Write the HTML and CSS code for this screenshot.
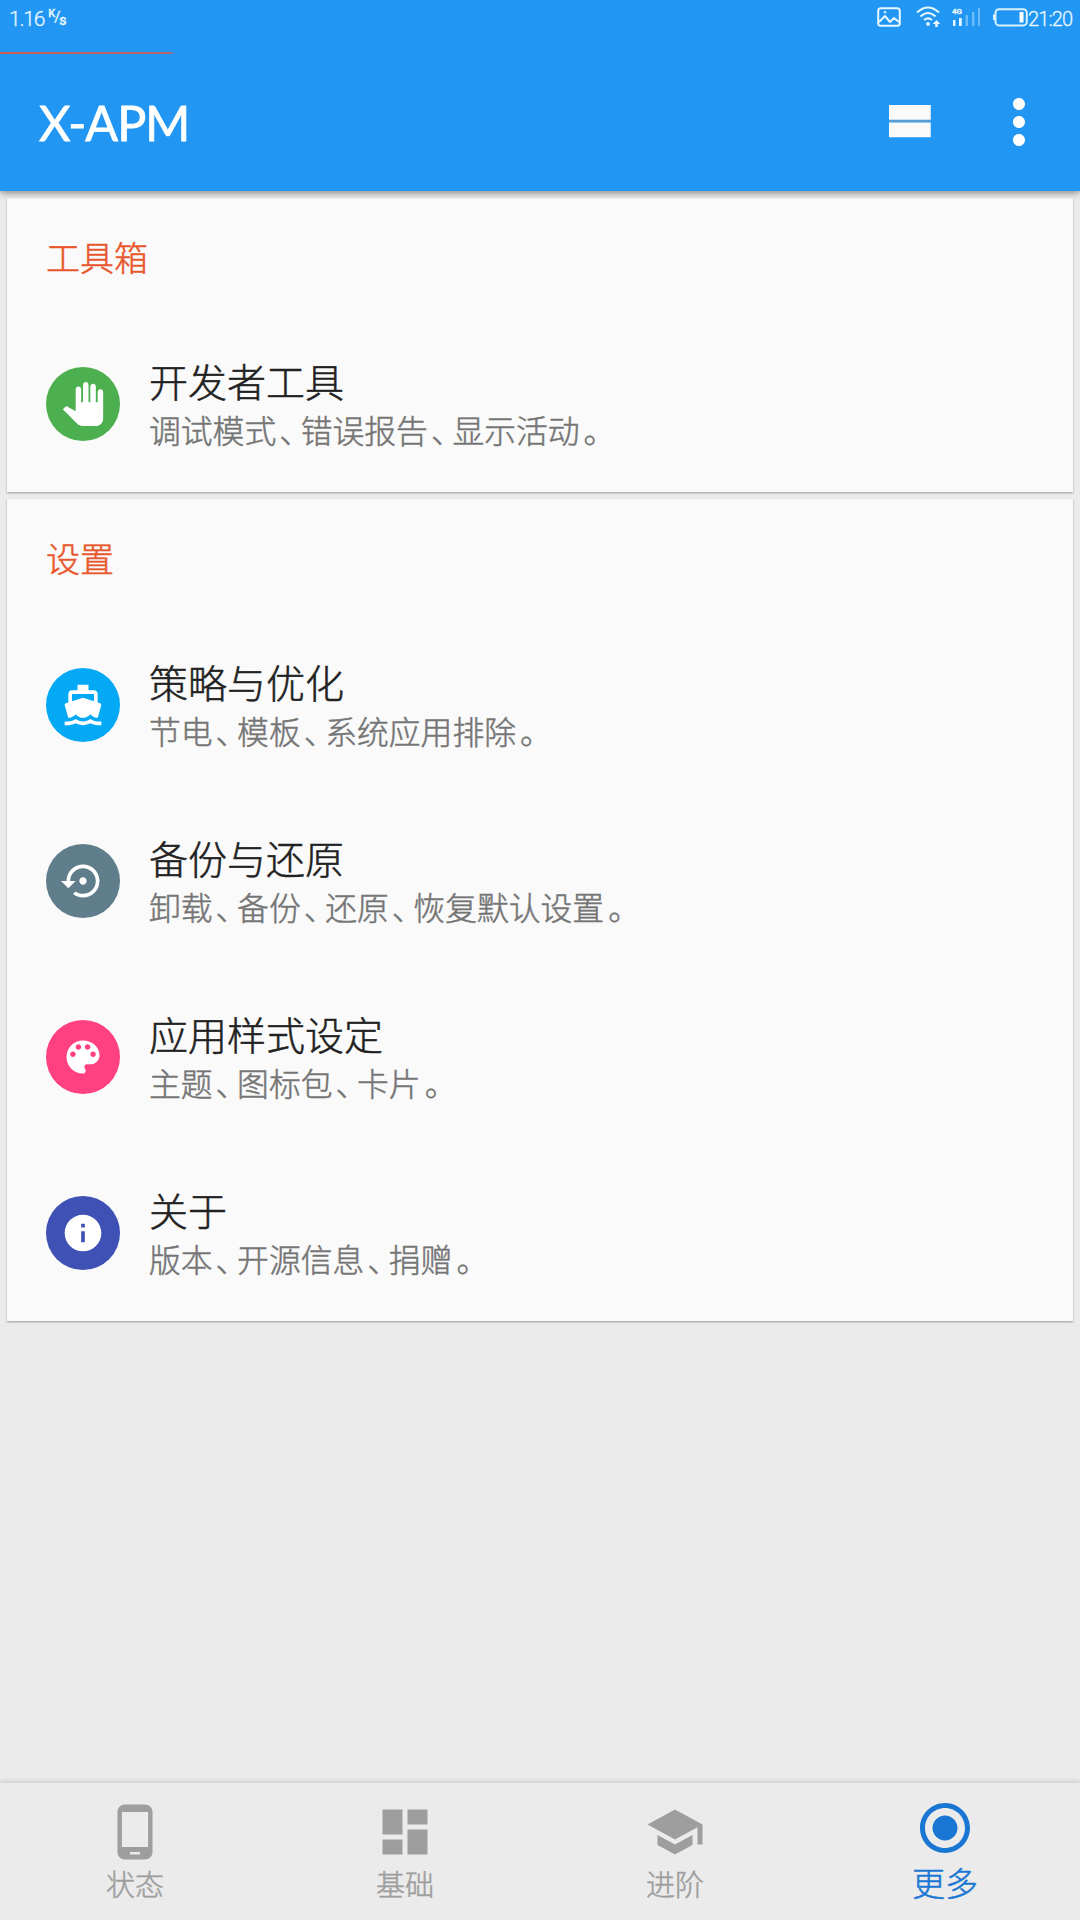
FILE: index.html
```html
<!DOCTYPE html>
<html lang="zh-CN">
<head>
<meta charset="utf-8">
<title>X-APM</title>
<link rel="stylesheet" href="styles.css">
</head>
<body>
<div class="screen">
  <header class="top">
    <div class="status">
      <div class="speed"><span>1.16</span><span class="unit"><span class="unit-k">K</span><span class="unit-slash">/</span><span class="unit-s">s</span></span></div>
      <div class="tray">
        <svg class="tray-image" viewBox="0 0 24 20" fill="none" stroke="#e6f7ff" stroke-width="2" stroke-linejoin="round"><rect x="1.2" y="1.2" width="21.6" height="17.6" rx="2.5"/><path d="M2 15l6-6 5 6 4-4 5 4"/><circle cx="8" cy="5.2" r=".9" fill="#e6f7ff" stroke-width="1"/></svg>
        <svg class="tray-wifi" viewBox="0 0 25 21" fill="none" stroke="#e6f7ff" stroke-width="2.1"><path d="M1 6.5Q12 -3.5 23 6.5M4.5 10.5Q12 3.5 19.5 10.5M8 14q4-3.4 8 0"/><circle cx="12" cy="18" r="1.9" fill="#e6f7ff" stroke="none"/><path d="M20.5 14l3.8 4h-2.5v3h-2.6v-3h-2.5z" fill="#e6f7ff" stroke="none"/></svg>
        <div class="signal"><span class="signal-type">4G</span>
          <svg viewBox="0 0 28 18"><path d="M1 12h2.4v6H1zM7 10h2.8v8H7z" fill="#e6f7ff"/><path d="M13.5 7H16v11h-2.500zM20 4h2.400v14H20zM26 0h2v18h-2z" fill="#6bbcf8"/></svg>
        </div>
        <svg class="tray-battery" viewBox="0 0 35 19"><rect x="2.500" y="1.200" width="31.300" height="16.200" rx="3.500" fill="none" stroke="#d8f1ff" stroke-width="2"/><rect x="0" y="6.500" width="2.500" height="5.500" fill="#d8f1ff"/><rect x="26.500" y="4" width="4" height="10.500" fill="#fff"/></svg>
        <span class="clock">21:20</span>
      </div>
    </div>
    <div class="progress"></div>
    <div class="toolbar">
      <h1>X-APM</h1>
      <svg class="stream" viewBox="0 0 24 24" fill="#fafafa"><path d="M4 18.100h16.700v-5.900H4zM4 5.200v5.900h16.700V5.200z"/><path d="M4 11.300h16.700v.6H4z" fill="#6e9fc4"/></svg>
      <svg class="overflow" viewBox="0 0 24 24" fill="#fff"><path d="M12 8c1.100 0 2-.9 2-2s-.9-2-2-2-2 .9-2 2 .9 2 2 2zm0 2c-1.100 0-2 .9-2 2s.9 2 2 2 2-.9 2-2-.9-2-2-2zm0 6c-1.100 0-2 .9-2 2s.9 2 2 2 2-.9 2-2-.9-2-2-2z"/></svg>
    </div>
  </header>

  <main class="content">
    <section class="card">
      <h2>工具箱</h2>
      <div class="row">
        <div class="badge green"><svg viewBox="0 0 24 24"><path d="M23 5.500V20c0 2.200-1.800 4-4 4h-7.300c-1.080 0-2.100-.43-2.850-1.190L1 14.830s1.260-1.230 1.300-1.250c.22-.19.49-.29.79-.29.22 0 .42.06.6.16.04.01 4.310 2.460 4.310 2.460V4c0-.83.67-1.500 1.500-1.500S11 3.170 11 4v7h1V1.500c0-.83.67-1.500 1.500-1.500S15 .67 15 1.500V11h1V2.500c0-.83.67-1.500 1.500-1.500s1.500.67 1.500 1.500V11h1V5.500c0-.83.67-1.500 1.500-1.500s1.500.67 1.500 1.500z"/></svg></div>
        <div class="text"><h3>开发者工具</h3><p>调试模式<i>、</i>错误报告<i>、</i>显示活动<b>。</b></p></div>
      </div>
    </section>

    <section class="card">
      <h2>设置</h2>
      <div class="row">
        <div class="badge sky"><svg viewBox="0 0 24 24"><path d="M20 21c-1.390 0-2.780-.47-4-1.320-2.440 1.710-5.560 1.710-8 0C6.780 20.530 5.390 21 4 21H2v2h2c1.380 0 2.740-.35 4-.99 2.520 1.290 5.480 1.290 8 0 1.260.65 2.620.99 4 .99h2v-2h-2zM3.950 19H4c1.600 0 3.020-.88 4-2 .98 1.120 2.400 2 4 2s3.020-.88 4-2c.98 1.120 2.400 2 4 2h.05l1.890-6.680c.08-.26.06-.54-.06-.78s-.34-.42-.6-.5L20 10.620V6c0-1.100-.9-2-2-2h-3V1H9v3H6c-1.100 0-2 .9-2 2v4.620l-1.290.42c-.26.08-.48.26-.6.5s-.15.52-.06.78L3.950 19zM6 6h12v3.970L12 8 6 9.970V6z"/></svg></div>
        <div class="text"><h3>策略与优化</h3><p>节电<i>、</i>模板<i>、</i>系统应用排除<b>。</b></p></div>
      </div>
      <div class="row">
        <div class="badge slate"><svg viewBox="0 0 24 24"><path d="M14 12c0-1.100-.9-2-2-2s-2 .9-2 2 .9 2 2 2 2-.9 2-2zm-2-9c-4.970 0-9 4.030-9 9H0l4 4 4-4H5c0-3.870 3.130-7 7-7s7 3.130 7 7-3.130 7-7 7c-1.510 0-2.910-.49-4.060-1.300l-1.420 1.440C8.040 20.300 9.940 21 12 21c4.970 0 9-4.030 9-9s-4.030-9-9-9z"/></svg></div>
        <div class="text"><h3>备份与还原</h3><p>卸载<i>、</i>备份<i>、</i>还原<i>、</i>恢复默认设置<b>。</b></p></div>
      </div>
      <div class="row">
        <div class="badge pink"><svg viewBox="0 0 24 24"><path d="M12 3c-4.970 0-9 4.030-9 9s4.030 9 9 9c.83 0 1.500-.67 1.500-1.500 0-.39-.15-.74-.39-1.010-.23-.26-.38-.61-.38-.99 0-.83.67-1.500 1.500-1.500H16c2.760 0 5-2.240 5-5 0-4.420-4.030-8-9-8zm-5.500 9c-.83 0-1.500-.67-1.500-1.500S5.670 9 6.500 9 8 9.670 8 10.500 7.330 12 6.500 12zm3-4C8.670 8 8 7.330 8 6.500S8.670 5 9.500 5s1.500.67 1.500 1.500S10.330 8 9.500 8zm5 0c-.83 0-1.500-.67-1.500-1.500S13.670 5 14.500 5s1.500.67 1.500 1.500S15.330 8 14.500 8zm3 4c-.83 0-1.500-.67-1.500-1.500S16.670 9 17.500 9s1.500.67 1.500 1.500-.67 1.500-1.500 1.500z"/></svg></div>
        <div class="text"><h3>应用样式设定</h3><p>主题<i>、</i>图标包<i>、</i>卡片<b>。</b></p></div>
      </div>
      <div class="row">
        <div class="badge indigo"><svg viewBox="0 0 24 24"><path d="M12 2C6.480 2 2 6.480 2 12s4.480 10 10 10 10-4.480 10-10S17.520 2 12 2zm1 15h-2v-6h2v6zm0-8h-2V7h2v2z"/></svg></div>
        <div class="text"><h3>关于</h3><p>版本<i>、</i>开源信息<i>、</i>捐赠<b>。</b></p></div>
      </div>
    </section>
  </main>

  <nav class="tabs">
    <div class="tab"><svg viewBox="0 0 24 24"><path d="M16 1H8C6.340 1 5 2.340 5 4v16c0 1.660 1.340 3 3 3h8c1.660 0 3-1.340 3-3V4c0-1.660-1.340-3-3-3zm-2 20h-4v-1h4v1zm3.250-3H6.750V4h10.500v14z"/></svg><span>状态</span></div>
    <div class="tab"><svg viewBox="0 0 24 24"><path d="M3 13h8V3H3v10zm0 8h8v-6H3v6zm10 0h8V11h-8v10zm0-18v6h8V3h-8z"/></svg><span>基础</span></div>
    <div class="tab"><svg viewBox="0 0 24 24"><path d="M5 13.180v4L12 21l7-3.820v-4L12 17l-7-3.820zM12 3L1 9l11 6 9-4.910V17h2V9L12 3z"/></svg><span>进阶</span></div>
    <div class="tab active"><svg viewBox="0 0 24 24"><path d="M12 7c-2.760 0-5 2.240-5 5s2.240 5 5 5 5-2.240 5-5-2.240-5-5-5zm0-5C6.480 2 2 6.480 2 12s4.480 10 10 10 10-4.480 10-10S17.520 2 12 2zm0 18c-4.420 0-8-3.580-8-8s3.580-8 8-8 8 3.580 8 8-3.580 8-8 8z"/></svg><span>更多</span></div>
  </nav>
</div>
</body>
</html>
```
FILE: styles.css
```css
* { box-sizing: border-box; margin: 0; padding: 0; }
body {
  background: #ebebeb;
  font-family: "Noto Sans CJK SC", sans-serif;
  font-weight: 300;
  -webkit-text-stroke: .5px currentColor;
}
svg { display: block; flex: none; }
.screen {
  width: 1080px;
  height: 1920px;
  display: flex;
  flex-direction: column;
  overflow: hidden;
}

/* Status bar and toolbar */
.top {
  height: 191px;
  flex: none;
  background: #2196f3;
  box-shadow: 0 2px 7px rgba(0, 0, 0, .42);
  z-index: 1;
}
.status {
  height: 52px;
  display: flex;
  justify-content: space-between;
  padding: 0 6px 0 9px;
  color: #e6f7ff;
  font-family: Roboto, sans-serif;
  -webkit-text-stroke-width: .3px;
}
.speed { display: flex; font-size: 21px; line-height: 38px; letter-spacing: -1.2px; }
.unit { display: flex; margin-left: 4px; font-weight: 500; letter-spacing: 0; }
.unit-k { font-size: 11px; line-height: 27px; }
.unit-slash { font-size: 15px; line-height: 35px; font-weight: 400; margin-left: -1px; }
.unit-s { font-size: 14px; line-height: 40px; margin-left: -1px; }
.tray { display: flex; align-items: flex-start; }
.tray-image { width: 24px; height: 20px; margin: 7px 15px 0 0; }
.tray-wifi { width: 25px; height: 21px; margin: 6px 11px 0 0; }
.signal { width: 28px; height: 19px; margin: 8px 13px 0 0; display: grid; }
.signal > * { grid-area: 1 / 1; }
.signal svg { width: 28px; height: 18px; }
.signal-type { font-size: 8px; line-height: 7px; font-weight: 700; }
.tray-battery { width: 35px; height: 19px; margin-top: 8px; }
.clock { font-size: 20px; line-height: 38px; letter-spacing: -.9px; width: 46px; white-space: nowrap; }
.progress {
  width: 175px;
  height: 2px;
  background: linear-gradient(90deg, #cc5a52, #b8686a 97%, #2196f3);
}
.toolbar {
  height: 135px;
  display: flex;
  align-items: center;
  padding: 0 25px 0 39px;
}
h1 {
  flex: 1;
  color: #fff;
  font: 400 48.500px/60px Lato, sans-serif;
  letter-spacing: -1px;
  -webkit-text-stroke-width: .8px;
}
.stream { width: 60px; height: 60px; margin-right: 44px; }
.overflow { width: 72px; height: 72px; }

/* Cards */
.content {
  flex: 1;
  display: flex;
  flex-direction: column;
  gap: 7px;
  padding: 7px 7px 0;
}
.card { background: #fafafa; box-shadow: 0 1px 2px rgba(0, 0, 0, .34); }
h2 {
  height: 118px;
  padding-left: 39px;
  color: #e8562c;
  font-size: 34px;
  font-weight: 300;
  line-height: 117px;
}
.row {
  height: 176px;
  display: flex;
  align-items: center;
  gap: 29px;
  padding-left: 39px;
}
.badge {
  width: 74px;
  height: 74px;
  border-radius: 50%;
  display: flex;
  align-items: center;
  justify-content: center;
}
.badge svg { width: 44px; height: 44px; fill: #fff; }
.green { background: #4caf50; }
.sky { background: #03a9f4; }
.slate { background: #607d8b; }
.pink { background: #ff4081; }
.indigo { background: #3f51b5; }
.text { padding-top: 1px; }
h3 { color: #212121; font-size: 39px; font-weight: 300; line-height: 49px; }
p { color: #757575; font-size: 31.800px; line-height: 48px; }
p i { font-style: normal; padding-left: 3px; letter-spacing: -10.300px; }
p b { font-weight: 300; padding-left: 4px; }

/* Bottom navigation */
.tabs {
  height: 137px;
  flex: none;
  display: grid;
  grid-template-columns: repeat(4, 1fr);
  background: #ebebeb;
  box-shadow: 0 -1px 5px rgba(0, 0, 0, .16);
}
.tab {
  display: flex;
  flex-direction: column;
  align-items: center;
  padding-top: 19px;
  color: #9e9e9e;
}
.tab svg { width: 60px; height: 60px; fill: currentColor; }
.tab span { font-size: 29px; line-height: 42px; }
.active { padding-top: 15px; color: #1976d2; }
.active span { font-size: 33px; line-height: 48px; }
```
